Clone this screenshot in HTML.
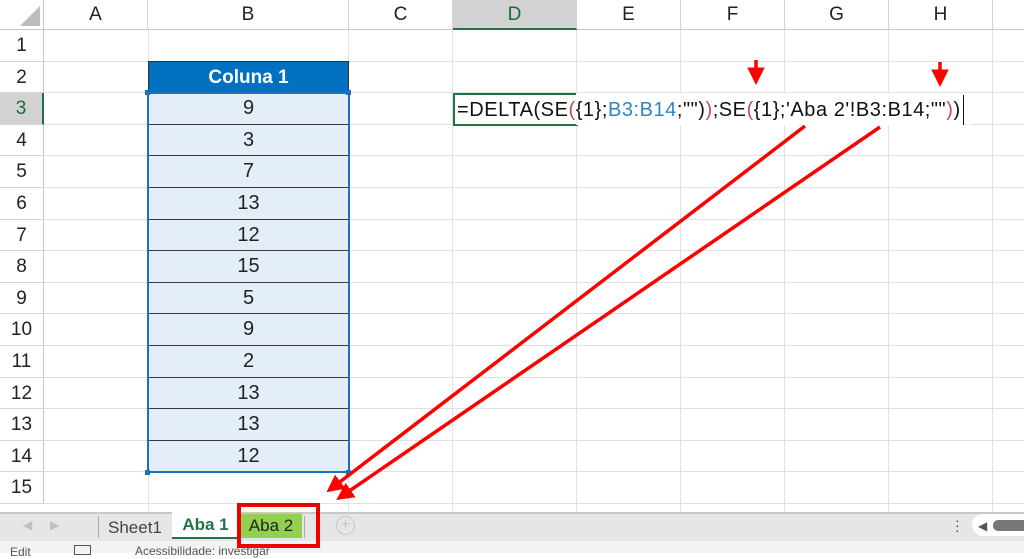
<!DOCTYPE html><html><head><meta charset="utf-8"><style>
*{margin:0;padding:0;box-sizing:border-box}
body{width:1024px;height:553px;overflow:hidden;background:#fff;font-family:"Liberation Sans",sans-serif;position:relative}
.a{position:absolute}
.ch{position:absolute;top:0;height:30px;border-right:1px solid #d4d4d4;border-bottom:1px solid #c8c8c8;text-align:center;line-height:30px;font-size:19px;color:#222;background:#fff}
.rh{position:absolute;left:0;width:44px;border-bottom:1px solid #d4d4d4;border-right:1px solid #c8c8c8;text-align:center;font-size:19px;color:#222;background:#fff}
.vl{position:absolute;top:30px;height:482px;width:1px;background:#e1e1e1}
.hl{position:absolute;left:44px;width:980px;height:1px;background:#e1e1e1}
.c{position:absolute;left:148px;width:201px;text-align:center;font-size:20px;color:#222;background:#e4eef8;border-bottom:1px solid #3a3a3a}
</style></head><body>
<div class="a" style="left:0;top:0;width:44px;height:30px;background:#fff;border-right:1px solid #c8c8c8;border-bottom:1px solid #c8c8c8"></div>
<svg class="a" style="left:16px;top:4px" width="26" height="24"><polygon points="24,2 24,22 4,22" fill="#bdbdbd"/></svg>
<div class="ch" style="left:44px;width:104px">A</div>
<div class="ch" style="left:148px;width:201px">B</div>
<div class="ch" style="left:349px;width:104px">C</div>
<div class="ch" style="left:453px;width:124px;background:#d2d2d2;color:#1e6b3a;border-bottom:2px solid #217346">D</div>
<div class="ch" style="left:577px;width:104px">E</div>
<div class="ch" style="left:681px;width:104px">F</div>
<div class="ch" style="left:785px;width:104px">G</div>
<div class="ch" style="left:889px;width:104px">H</div>
<div class="ch" style="left:993px;width:40px"></div>
<div class="vl" style="left:148px"></div><div class="vl" style="left:348px"></div><div class="vl" style="left:452px"></div><div class="vl" style="left:576px"></div><div class="vl" style="left:680px"></div><div class="vl" style="left:784px"></div><div class="vl" style="left:888px"></div><div class="vl" style="left:992px"></div>
<div id="rows"></div>
<script>
var h='';for(var i=1;i<=15;i++){var t=30+(i-1)*31.6;var s=i==3?'background:#d2d2d2;color:#1e6b3a;border-right:2px solid #217346;':'';h+='<div class="rh" style="top:'+t+'px;height:31.6px;line-height:31.6px;'+s+'">'+i+'</div><div class="hl" style="top:'+(t+30.6)+'px"></div>';}
var v=[9,3,7,13,12,15,5,9,2,13,13,12];for(var j=0;j<12;j++){var t=30+(j+2)*31.6;h+='<div class="c" style="top:'+t+'px;height:31.6px;line-height:31px">'+v[j]+'</div>';}
document.getElementById('rows').innerHTML=h;
</script>
<div class="a" style="left:148px;top:61px;width:201px;height:32px;background:#0070c0;color:#fff;font-weight:bold;font-size:19px;text-align:center;line-height:32px;border:1px solid #333">Coluna 1</div>
<div class="a" style="left:147px;top:92px;width:203px;height:381px;border:2px solid #1f6fc0"></div>
<div class="a" style="left:145px;top:90px;width:5px;height:5px;background:#1f6fc0"></div>
<div class="a" style="left:346px;top:90px;width:5px;height:5px;background:#1f6fc0"></div>
<div class="a" style="left:145px;top:470px;width:5px;height:5px;background:#1f6fc0"></div>
<div class="a" style="left:346px;top:470px;width:5px;height:5px;background:#1f6fc0"></div>
<div class="a" style="left:453px;top:93px;width:125px;height:33px;border:2px solid #217346"></div>
<div class="a" style="left:576px;top:93px;width:395px;height:32px;background:#fff"></div>
<div class="a" style="left:457px;top:95px;height:30px;line-height:30px;font-size:20px;letter-spacing:0.55px;color:#111;white-space:nowrap;border-right:1px solid #111;padding-right:2px">=DELTA(SE<span style="color:#c0504d">(</span>{1};<span style="color:#2e86c9">B3:B14</span>;"")<span style="color:#c0504d">)</span>;SE<span style="color:#c0504d">(</span>{1};'Aba 2'!B3:B14;""<span style="color:#c0504d">)</span>)</div>
<div class="a" style="left:0;top:512px;width:1024px;height:29px;background:#e6e6e6;border-top:2px solid #c8c8c8"></div>
<div class="a" style="left:23px;top:518px;font-size:12px;color:#c0c0c0">◀</div>
<div class="a" style="left:50px;top:518px;font-size:12px;color:#c0c0c0">▶</div>
<div class="a" style="left:98px;top:516px;width:1px;height:22px;background:#aaa"></div>
<div class="a" style="left:108px;top:514px;font-size:17px;color:#444;line-height:27px">Sheet1</div>
<div class="a" style="left:172px;top:512px;width:67px;height:27px;background:#fff;border-bottom:2px solid #217346;color:#217346;font-weight:bold;font-size:17px;text-align:center;line-height:26px">Aba 1</div>
<div class="a" style="left:240px;top:514px;width:62px;height:24px;background:#92d050;color:#222;font-size:17px;text-align:center;line-height:24px">Aba 2</div>
<div class="a" style="left:304px;top:516px;width:1px;height:22px;background:#aaa"></div>
<div class="a" style="left:336px;top:516px;width:19px;height:19px;border:1.5px solid #c8c8c8;border-radius:50%;color:#c8c8c8;text-align:center;line-height:15px;font-size:16px">+</div>
<div class="a" style="left:955px;top:518px;font-size:14px;color:#444;line-height:5px">·<br>·<br>·</div>
<div class="a" style="left:972px;top:514px;width:60px;height:22px;background:#fff;border-radius:11px"></div>
<div class="a" style="left:978px;top:519px;font-size:12px;color:#555">◀</div>
<div class="a" style="left:993px;top:520px;width:40px;height:11px;background:#777;border-radius:5px"></div>
<div class="a" style="left:0;top:541px;width:1024px;height:12px;background:#f3f3f3"></div>
<div class="a" style="left:10px;top:545px;font-size:12px;color:#555">Edit</div>
<div class="a" style="left:74px;top:545px;width:17px;height:10px;border:1.5px solid #555"></div>
<div class="a" style="left:135px;top:544px;font-size:12px;color:#555">Acessibilidade: investigar</div>
<div class="a" style="left:237px;top:503px;width:83px;height:45px;border:4px solid #e00"></div>
<svg class="a" style="left:0;top:0" width="1024" height="553">
<defs><marker id="m" markerWidth="5" markerHeight="5" refX="3" refY="2.5" orient="auto" markerUnits="strokeWidth"><path d="M0,0 L5,2.5 L0,5 z" fill="#f00"/></marker></defs>
<g stroke="#f00" stroke-width="3.5" fill="none" marker-end="url(#m)">
<line x1="756" y1="60" x2="756" y2="78"/>
<line x1="940" y1="62" x2="940" y2="80"/>
<line x1="805" y1="126" x2="332" y2="488"/>
<line x1="880" y1="127" x2="342" y2="496"/>
</g></svg>
</body></html>
